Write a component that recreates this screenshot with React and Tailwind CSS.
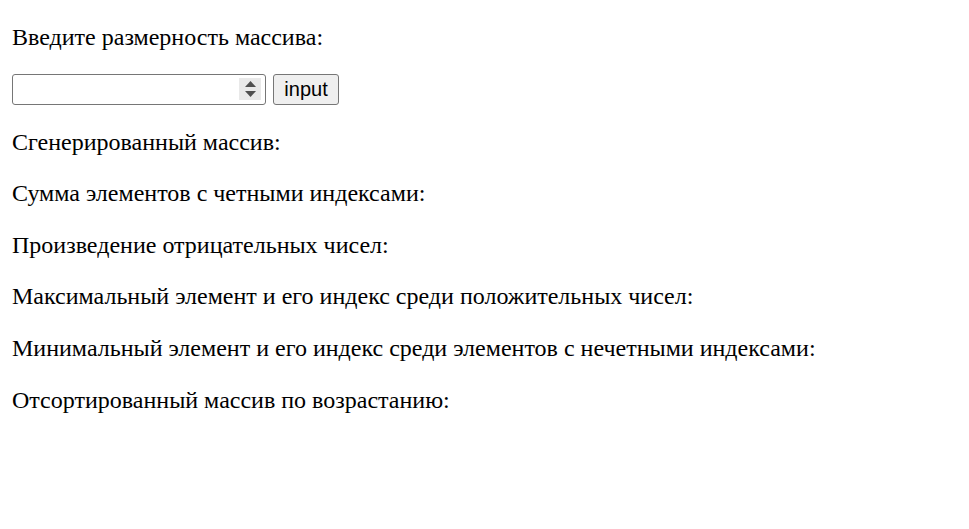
import React from "react";

export default function App() {
  const lines = [
    "Сгенерированный массив:",
    "Сумма элементов с четными индексами:",
    "Произведение отрицательных чисел:",
    "Максимальный элемент и его индекс среди положительных чисел:",
    "Минимальный элемент и его индекс среди элементов с нечетными индексами:",
    "Отсортированный массив по возрастанию:",
  ];
  return (
    <div className="min-h-[529px] bg-white px-3 pt-6 font-['Liberation_Serif',serif] text-[24px] leading-[27.6px] text-black">
      <p className="m-0">Введите размерность массива:</p>
      <div className="mt-[22px] flex items-start gap-[7px]">
        <div className="flex h-[31px] w-[254px] items-center rounded-[3px] border-[1.5px] border-[#767676] bg-white pr-[4px]">
          <input
            type="text"
            className="h-full min-w-0 flex-1 bg-transparent px-1 font-['Liberation_Sans',sans-serif] text-[20px] outline-none"
          />
          <div className="flex h-[22px] w-[22px] flex-col items-center justify-center gap-[4px] bg-[#e9e9e9]">
            <svg width="11" height="6" viewBox="0 0 11 6">
              <polygon points="5.5,0 11,6 0,6" fill="#505050" />
            </svg>
            <svg width="11" height="6" viewBox="0 0 11 6">
              <polygon points="0,0 11,0 5.5,6" fill="#505050" />
            </svg>
          </div>
        </div>
        <button className="flex h-[31px] w-[66px] items-center justify-center rounded-[3px] border-[1.5px] border-[#767676] bg-[#efefef] font-['Liberation_Sans',sans-serif] text-[20px] leading-none text-black">
          input
        </button>
      </div>
      <div className="mt-6 flex flex-col gap-6">
        {lines.map((t) => (
          <p key={t} className="m-0">
            {t}
          </p>
        ))}
      </div>
    </div>
  );
}
